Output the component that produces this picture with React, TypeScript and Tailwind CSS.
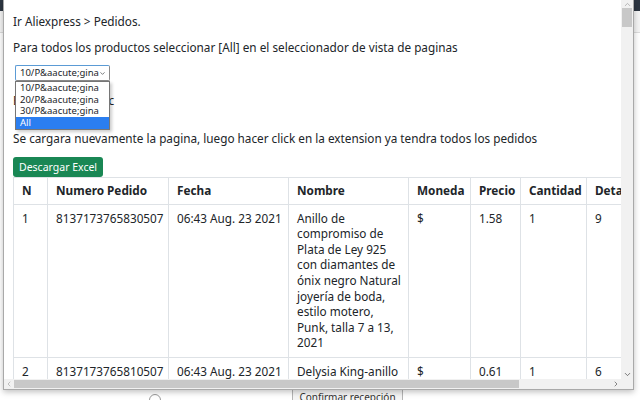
import { ChevronDown, ChevronUp, ChevronLeft, ChevronRight } from 'lucide-react';

const headers = ['N', 'Numero Pedido', 'Fecha', 'Nombre', 'Moneda', 'Precio', 'Cantidad', 'Detalle'];
const widths = ['w-[34px]', 'w-[121px]', 'w-[120px]', 'w-[120px]', 'w-[62px]', 'w-[50px]', 'w-[66px]', 'w-[140px]'];

const rows = [
  {
    n: '1',
    pedido: '8137173765830507',
    fecha: '06:43 Aug. 23 2021',
    nombre: [
      'Anillo de',
      'compromiso de',
      'Plata de Ley 925',
      'con diamantes de',
      'ónix negro Natural',
      'joyería de boda,',
      'estilo motero,',
      'Punk, talla 7 a 13,',
      '2021',
    ],
    moneda: '$',
    precio: '1.58',
    cantidad: '1',
    detalle: '9',
  },
  {
    n: '2',
    pedido: '8137173765810507',
    fecha: '06:43 Aug. 23 2021',
    nombre: ['Delysia King-anillo', 'de compromiso'],
    moneda: '$',
    precio: '0.61',
    cantidad: '1',
    detalle: '6',
  },
];

const options = ['10/P&aacute;gina', '20/P&aacute;gina', '30/P&aacute;gina', 'All'];

const cell = 'border border-[#dee2e6] px-[8px] py-[6px] leading-[15.6px]';

function Popup() {
  return (
    <div className="absolute left-[3px] top-0 w-[631px] h-[390px] bg-white border-x border-b border-[#a9a9a9] shadow-[0_2px_6px_rgba(0,0,0,0.25)] flex flex-col">
      <div className="flex flex-1 min-h-0">
        <div className="flex-1 overflow-hidden relative">
          <div className="w-[740px] px-[9px] pt-[13px] text-[11.75px] leading-[16px] text-[#212529]">
            <p>Ir Aliexpress &gt; Pedidos.</p>
            <p className="mt-[10px]">Para todos los productos seleccionar [All] en el seleccionador de vista de paginas</p>

            <div className="relative mt-[10px] ml-[2px] w-[95px]">
              <div className="h-[16px] border border-[#8a8a8a] border-l-[#5b9bd5] border-t-[#5b9bd5] rounded-[2px] flex items-center justify-between pl-[4px] pr-[3px] text-[9.5px] leading-none">
                <span>10/P&amp;aacute;gina</span>
                <ChevronDown size={9} strokeWidth={2} />
              </div>
              <div className="absolute left-0 top-full w-[95px] bg-white border border-[#767676] shadow-[2px_2px_3px_rgba(0,0,0,0.2)] z-10 text-[9.5px] leading-[11.7px]">
                {options.map((o) => (
                  <div key={o} className={o === 'All' ? 'pl-[4px] bg-[#2b7ef0] text-white' : 'pl-[4px]'}>
                    {o}
                  </div>
                ))}
              </div>
            </div>

            <p className="mt-[11px]">Espere y dé un clic</p>
            <p className="mt-[22px]">Se cargara nuevamente la pagina, luego hacer click en la extension ya tendra todos los pedidos</p>

            <button className="mt-[11px] h-[20px] px-[6px] bg-[#198754] text-white text-[10.5px] leading-none rounded-[3px] block">
              Descargar Excel
            </button>

            <table className="table-fixed border-collapse w-[713px] text-left">
              <colgroup>
                {widths.map((w, i) => (
                  <col key={i} className={w} />
                ))}
              </colgroup>
              <thead>
                <tr>
                  {headers.map((h) => (
                    <th key={h} className="border border-[#dee2e6] px-[8px] py-[5px] font-bold leading-[15.6px] whitespace-nowrap overflow-hidden">
                      {h}
                    </th>
                  ))}
                </tr>
              </thead>
              <tbody>
                {rows.map((r) => (
                  <tr key={r.n} className="align-top">
                    <td className={cell}>{r.n}</td>
                    <td className={cell + ' whitespace-nowrap'}>{r.pedido}</td>
                    <td className={cell + ' whitespace-nowrap'}>{r.fecha}</td>
                    <td className={cell + ' whitespace-nowrap'}>
                      {r.nombre.map((l, i) => (
                        <div key={i}>{l}</div>
                      ))}
                    </td>
                    <td className={cell}>{r.moneda}</td>
                    <td className={cell}>{r.precio}</td>
                    <td className={cell}>{r.cantidad}</td>
                    <td className={cell}>{r.detalle}</td>
                  </tr>
                ))}
              </tbody>
            </table>
          </div>
        </div>

        <div className="w-[12px] bg-[#f1f1f1] flex flex-col items-center text-[#a3a3a3]">
          <div className="h-[8px] flex items-center">
            <ChevronUp size={9} strokeWidth={2} />
          </div>
          <div className="h-[19px] w-[10px] bg-[#c8c8c8]" />
          <div className="flex-1" />
          <div className="h-[10px] flex items-center text-[#505050]">
            <ChevronDown size={9} strokeWidth={2} />
          </div>
        </div>
      </div>

      <div className="h-[10px] flex bg-[#f1f1f1]">
        <div className="w-[10px] flex items-center justify-center text-[#a3a3a3]">
          <ChevronLeft size={8} strokeWidth={2} />
        </div>
        <div className="w-[505px] my-[1px] bg-[#c8c8c8]" />
        <div className="flex-1" />
        <div className="w-[10px] flex items-center justify-center text-[#505050]">
          <ChevronRight size={8} strokeWidth={2} />
        </div>
        <div className="w-[12px] bg-[#f1f1f1]" />
      </div>
    </div>
  );
}

export default function App() {
  return (
    <div className="relative w-[640px] h-[400px] overflow-hidden bg-white font-['Noto_Sans',sans-serif]">
      {/* page behind the extension popup */}
      <div className="h-[11px] bg-[#2d3642]" />
      <div className="h-[22px] bg-[#f4f4f4] border-b border-[#dcdcdc]" />
      <div className="h-[355px]" />
      <div className="h-[12px] flex">
        <div className="w-[148px]" />
        <div className="w-[84px] border-t-2 border-[#4a90d9] pt-[4px] pl-[1px]">
          <div className="w-[12px] h-[12px] rounded-full border border-[#9a9a9a]" />
        </div>
        <div className="w-[60px]" />
        <div className="w-[111px] h-[18px] border border-[#b5b5b5] bg-[#f5f5f5] pt-[2px] text-[10px] leading-[12px] text-center text-[#333]">
          Confirmar recepción
        </div>
      </div>
      <Popup />
    </div>
  );
}
